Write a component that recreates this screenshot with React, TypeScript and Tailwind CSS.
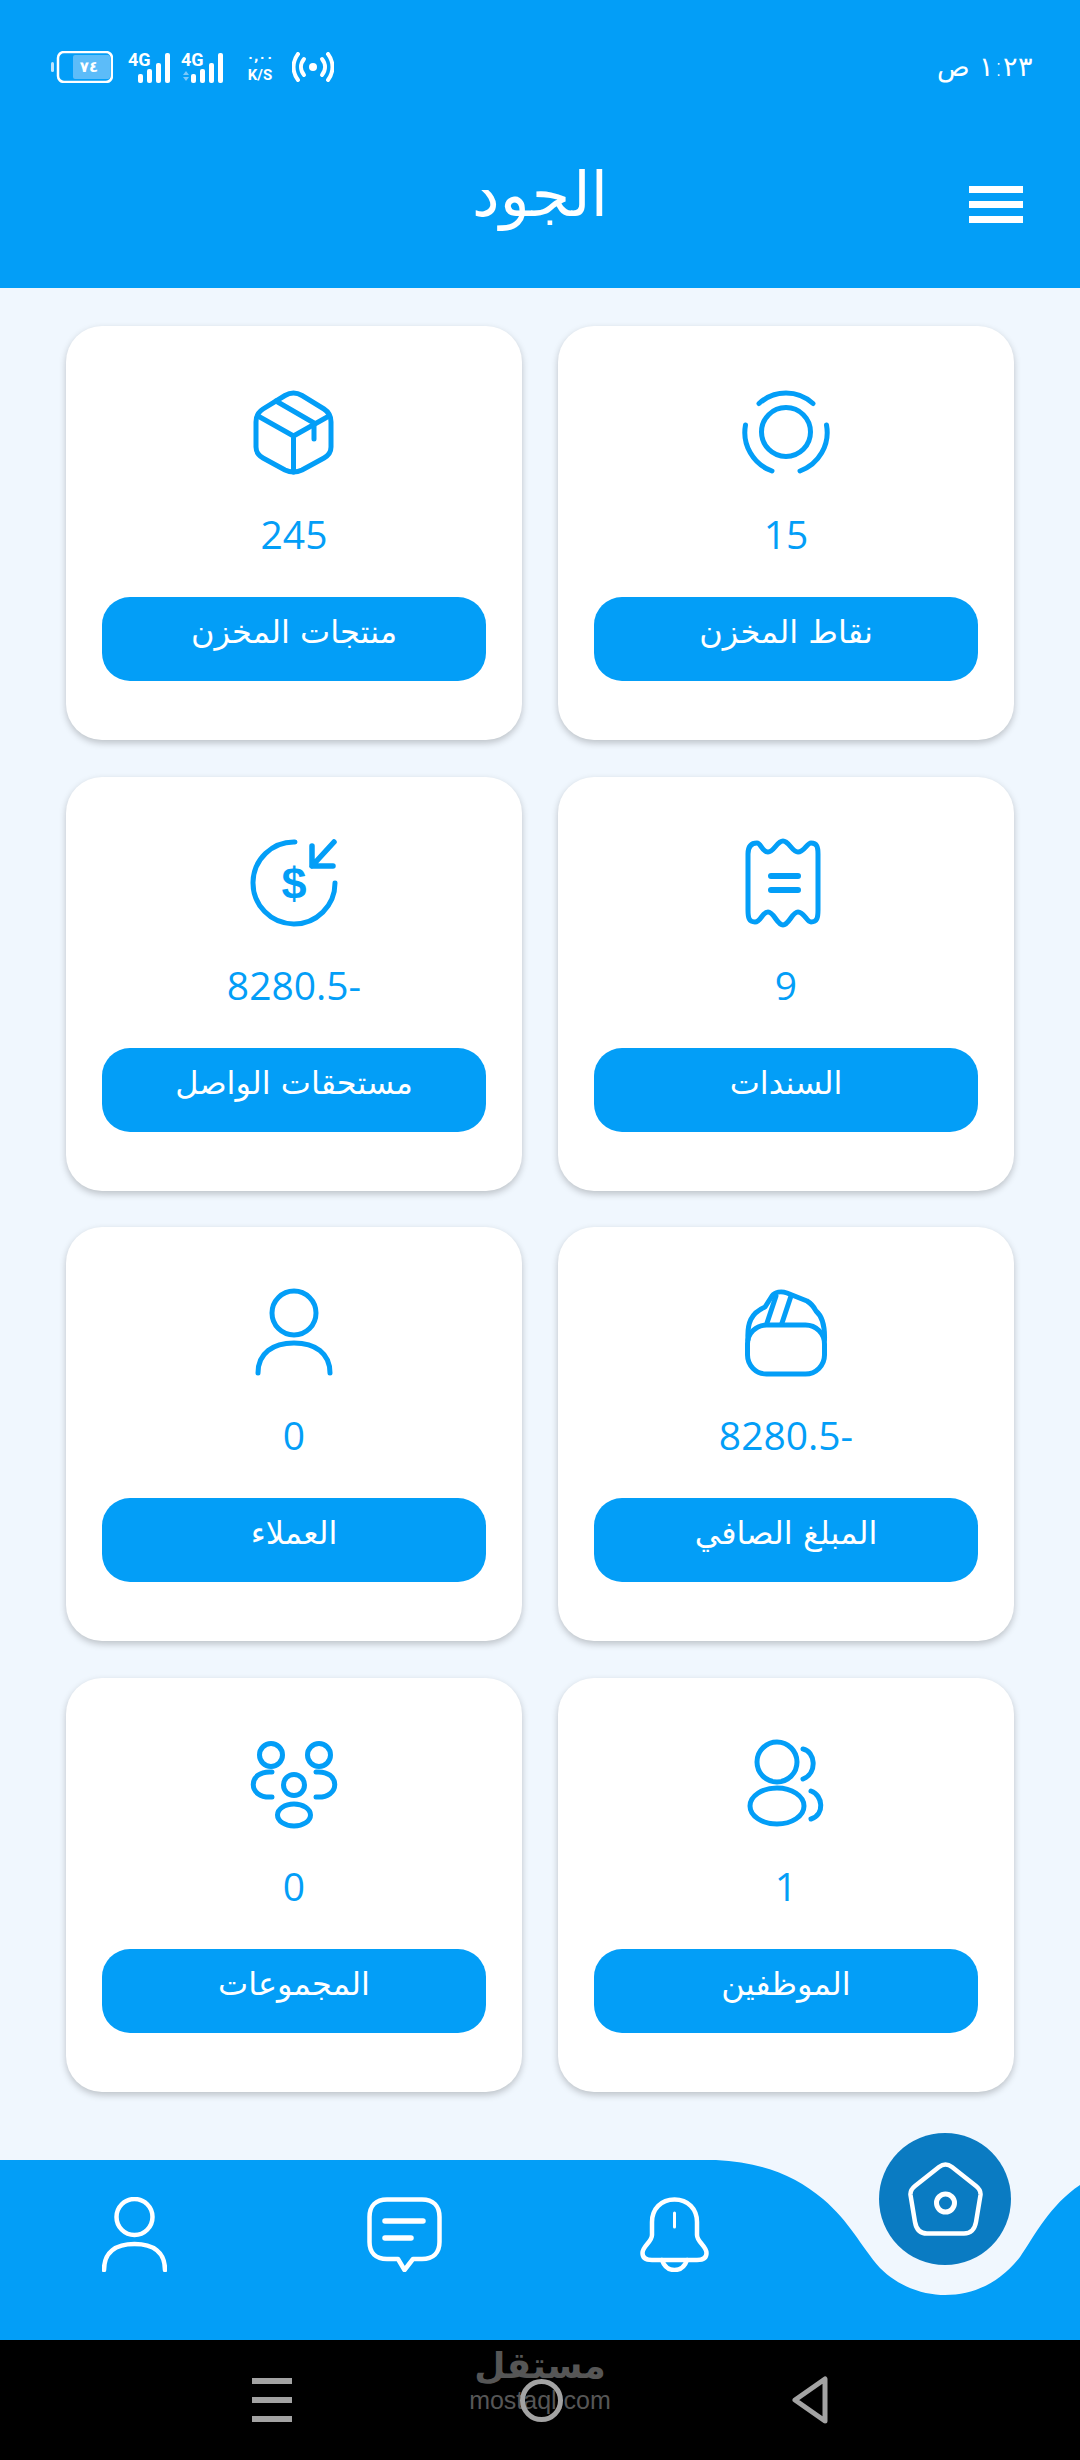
import React from "react";

const BLUE = "#039ef7";

function Ic({ children }: { children: React.ReactNode }) {
  return (
    <svg width="90" height="90" viewBox="0 0 90 90" fill="none" stroke={BLUE} strokeWidth="5" strokeLinecap="round" strokeLinejoin="round">
      {children}
    </svg>
  );
}

const icons: Record<string, React.ReactNode> = {
  target: (
    <Ic>
      <circle cx="45" cy="45" r="24.5" />
      <path d="M18 16.5A40 40 0 0 1 72 16.5" />
      <path d="M4.5 38A41 41 0 0 0 31 84" />
      <path d="M85.5 38A41 41 0 0 1 59 84" />
    </Ic>
  ),
  box: (
    <Ic>
      <path d="M36 8.5Q44.5 3.5 53 8.5L75 22Q82 26.5 82 35V60Q82 67 75 71L53 83Q44.5 87 36 83L14 71Q7 67 7 60V35Q7 26.5 14 22Z" />
      <path d="M9 29L44.5 49L80 29M44.5 49V85" />
      <path d="M27 14L65 36V52" />
    </Ic>
  ),
  receipt: (
    <Ic>
      <path d="M16 5C20 5 21 14 27 14C33 14 36 3 42 3C48 3 51 14 57 14C63 14 66 5 70 5C76 5 77 9 77 16V72C77 80 76 84 70 84C66 84 63 74 57 74C51 74 48 87 42 87C36 87 33 74 27 74C21 74 20 84 14 84C8 84 7 80 7 72V16C7 9 10 5 16 5Z" />
      <path d="M30 38H57M30 52H57" strokeWidth="6" />
    </Ic>
  ),
  dollar: (
    <Ic>
      <path d="M46 4A41 41 0 1 0 86 45" />
      <path d="M85 4L63 28M63 8V28H84" strokeWidth="5.5" />
      <text x="45" y="61" textAnchor="middle" fontFamily="'Liberation Sans', sans-serif" fontWeight="700" fontSize="45" fill={BLUE} stroke="none">$</text>
    </Ic>
  ),
  wallet: (
    <Ic>
      <rect x="6.5" y="37" width="77" height="49" rx="19" />
      <path d="M7 52C6 35 10 25 24 19L31 8C34 4 40 3 46 5L66 13C71 16 73 19 75 23C81 28 84 36 83.5 52" />
      <path d="M26 35L35 8M41 35L50 8" />
    </Ic>
  ),
  person: (
    <Ic>
      <circle cx="45" cy="25" r="22" />
      <path d="M9 85C9 65 24 55 45 55C66 55 81 65 81 85" />
    </Ic>
  ),
  users: (
    <Ic>
      <circle cx="36" cy="23" r="20" />
      <ellipse cx="36" cy="67" rx="27" ry="18" />
      <path d="M62 10C74 12 77 34 62 40" />
      <path d="M70 52C82 56 84 76 70 80" />
    </Ic>
  ),
  group: (
    <Ic>
      <circle cx="22" cy="16" r="11.5" />
      <circle cx="70" cy="16" r="11.5" />
      <circle cx="45" cy="46" r="10.5" />
      <ellipse cx="45" cy="76" rx="16.5" ry="11" />
      <path d="M23 33C-2 31 -2 60 23 58" />
      <path d="M67 33C92 31 92 60 67 58" />
    </Ic>
  ),
};

const cards = [
  { icon: "target", value: "15", label: "نقاط المخزن" },
  { icon: "box", value: "245", label: "منتجات المخزن" },
  { icon: "receipt", value: "9", label: "السندات" },
  { icon: "dollar", value: "-8280.5", label: "مستحقات الواصل" },
  { icon: "wallet", value: "-8280.5", label: "المبلغ الصافي" },
  { icon: "person", value: "0", label: "العملاء" },
  { icon: "users", value: "1", label: "الموظفين" },
  { icon: "group", value: "0", label: "المجموعات" },
];

function Signal({ arrows }: { arrows?: boolean }) {
  return (
    <svg width="44" height="40" viewBox="0 -6 44 40" fill="#fff" className="-mt-[6px] -mb-[2px]">
      <text x="0" y="15" fontFamily="Roboto, sans-serif" fontWeight="700" fontSize="18">4G</text>
      <rect x="10" y="23" width="5" height="9" rx="2" />
      <rect x="19" y="18" width="5" height="14" rx="2" />
      <rect x="28" y="12" width="5" height="20" rx="2" />
      <rect x="37" y="2" width="5" height="30" rx="2" />
      {arrows && <path d="M2 24L5 20L8 24ZM2 26L5 30L8 26Z" fill="#7cc8fa" />}
    </svg>
  );
}

function StatusBar() {
  return (
    <div className="flex items-start justify-between pl-[51px] pr-[47px] pt-[51px] h-[88px]">
      <div className="flex items-center h-[32px]">
        <svg width="62" height="32" viewBox="0 0 62 32" className="mr-[15px]">
          <rect x="0" y="11" width="3" height="10" rx="1.5" fill="#bfe4fc" />
          <rect x="7" y="1" width="54" height="30" rx="6" fill="none" stroke="#fff" strokeWidth="2.5" />
          <rect x="22" y="4" width="37" height="24" rx="2" fill="#5cbcf9" />
          <text x="38" y="21" textAnchor="middle" fontFamily="'DejaVu Sans', sans-serif" fontWeight="700" fontSize="15" fill="#fff">٧٤</text>
        </svg>
        <Signal />
        <div className="w-[9px]" />
        <Signal arrows />
        <div className="flex flex-col items-center ml-[21px] w-[28px] text-white font-bold font-['Roboto'] leading-none">
          <span className="text-[12px] h-[17px] font-['DejaVu_Sans']">٠,٠٠</span>
          <span className="text-[15px]">K/S</span>
        </div>
        <svg width="42" height="30" viewBox="0 0 42 30" fill="none" stroke="#fff" strokeWidth="4" strokeLinecap="round" className="ml-[18px]">
          <circle cx="21" cy="15" r="4" fill="#fff" stroke="none" />
          <path d="M12 7C8 12 8 18 12 23M30 7C34 12 34 18 30 23" />
          <path d="M6 2C0 10 0 20 6 28M36 2C42 10 42 20 36 28" />
        </svg>
      </div>
      <span dir="rtl" className="text-white text-[27px] leading-[32px] font-['DejaVu_Sans'] font-extralight">١:٢٣ ص</span>
    </div>
  );
}

function Card({ icon, value, label }: { icon: string; value: string; label: string }) {
  return (
    <div className="h-[414px] rounded-[36px] bg-white shadow-[0_3px_7px_rgba(0,0,0,0.22)] flex flex-col items-center pt-[61px]">
      <div className="h-[90px] w-[90px]">{icons[icon]}</div>
      <div className="mt-[32px] h-[50px] leading-[50px] text-[39px] font-medium text-[#039ef7] font-['Open_Sans']">{value}</div>
      <button className="mt-[38px] w-[384px] h-[84px] rounded-[28px] bg-[#039ef7] text-white text-[32px] leading-[71px] pb-[13px] font-['DejaVu_Sans']">
        {label}
      </button>
    </div>
  );
}

function BottomNav() {
  return (
    <div className="relative h-[180px] flex items-start">
      <svg width="1080" height="180" viewBox="0 0 1080 180" className="absolute inset-0" fill={BLUE}>
        <path d="M0 0H716C760 2 795 15 823 39C850 62 860 85 880 108C900 128 925 135 945 135C975 135 1000 122 1020 97C1035 75 1050 45 1080 25V180H0Z" />
      </svg>
      <div className="relative flex items-center pt-[37px] pl-[102px]">
        <svg width="65" height="75" viewBox="0 0 65 75" fill="none" stroke="#fff" strokeWidth="4.5" strokeLinecap="round">
          <circle cx="32.5" cy="20" r="18" />
          <path d="M2 73C2 55 14 47 32.5 47C51 47 63 55 63 73" />
        </svg>
        <svg width="75" height="75" viewBox="0 0 75 75" fill="none" stroke="#fff" strokeWidth="4.5" strokeLinecap="round" strokeLinejoin="round" className="ml-[200px]">
          <path d="M20 2.5H55C66 2.5 72.5 9 72.5 20V45C72.5 56 66 62 55 62H46L37.5 73L31 62H20C9 62 2.5 56 2.5 45V20C2.5 9 9 2.5 20 2.5Z" />
          <path d="M18 24H56" strokeWidth="5.5" />
          <path d="M18 41H44" strokeWidth="5.5" />
        </svg>
        <svg width="69" height="75" viewBox="0 0 69 75" fill="none" stroke="#fff" strokeWidth="4.5" strokeLinecap="round" strokeLinejoin="round" className="ml-[198px]">
          <path d="M34.5 2.5C21 2.5 12 12 12 25V38C12 45 2.5 49 2.5 56C2.5 61 6 63 12 63H57C63 63 66.5 61 66.5 56C66.5 49 57 45 57 38V25C57 12 48 2.5 34.5 2.5Z" />
          <path d="M34.5 16V30" strokeWidth="3" />
          <path d="M22 63C24 69 28 73 34.5 73C41 73 45 69 47 63" />
        </svg>
      </div>
      <div className="absolute left-[879px] top-[-27px] w-[132px] h-[132px] rounded-full bg-[#0a7bc2] flex items-center justify-center">
        <svg width="75" height="75" viewBox="0 0 75 75" fill="none" stroke="#fff" strokeWidth="4.5" strokeLinejoin="round">
          <path d="M31 5Q37.5 0 44 5L68 24Q73 28 72.5 33L68 60Q66 71.5 56 71.5H19Q9 71.5 7 60L2.5 33Q2 28 7 24Z" />
          <circle cx="37.5" cy="41" r="9" strokeWidth="5" />
        </svg>
      </div>
    </div>
  );
}

function NavBar() {
  return (
    <div className="relative h-[120px] bg-black flex items-center justify-center">
      <div className="absolute left-[474px] top-[4px] w-[132px] flex flex-col items-center text-[#565656]">
        <span className="text-[36px] leading-[44px] font-bold font-['DejaVu_Sans']">مستقل</span>
        <span className="text-[25px] leading-[24px] font-['Liberation_Sans']">mostaql.com</span>
      </div>
      <div className="relative flex items-center">
        <div className="flex flex-col gap-[13px] w-[40px] mr-[228px]">
          <div className="h-[6px] bg-[#a3a3a3]" />
          <div className="h-[6px] bg-[#a3a3a3]" />
          <div className="h-[6px] bg-[#a3a3a3]" />
        </div>
        <div className="w-[43px] h-[43px] rounded-full border-[5px] border-[#a3a3a3]" />
        <svg width="36" height="48" viewBox="0 0 36 48" fill="none" stroke="#a3a3a3" strokeWidth="5" strokeLinejoin="round" className="ml-[229px]">
          <path d="M33 3V45L3 24Z" />
        </svg>
      </div>
    </div>
  );
}

export default function App() {
  return (
    <div className="w-[1080px] h-[2460px] flex flex-col bg-[#f0f7fe] overflow-hidden font-['DejaVu_Sans']">
      <header className="h-[288px] bg-[#039ef7] flex flex-col">
        <StatusBar />
        <div className="grid grid-cols-[1fr_auto_1fr] items-center pt-[71px]">
          <div />
          <h1 dir="rtl" className="text-white text-[62px] leading-[72px] font-normal font-['DejaVu_Sans']">الجود</h1>
          <div className="justify-self-end flex flex-col gap-[8px] w-[54px] mt-[18px] mr-[57px]">
            <div className="h-[7px] bg-white" />
            <div className="h-[7px] bg-white" />
            <div className="h-[7px] bg-white" />
          </div>
        </div>
      </header>
      <main dir="rtl" className="flex-1 grid grid-cols-2 gap-x-[36px] gap-y-[36.7px] px-[66px] pt-[38px] content-start">
        {cards.map((c, i) => (
          <Card key={i} {...c} />
        ))}
      </main>
      <BottomNav />
      <NavBar />
    </div>
  );
}
